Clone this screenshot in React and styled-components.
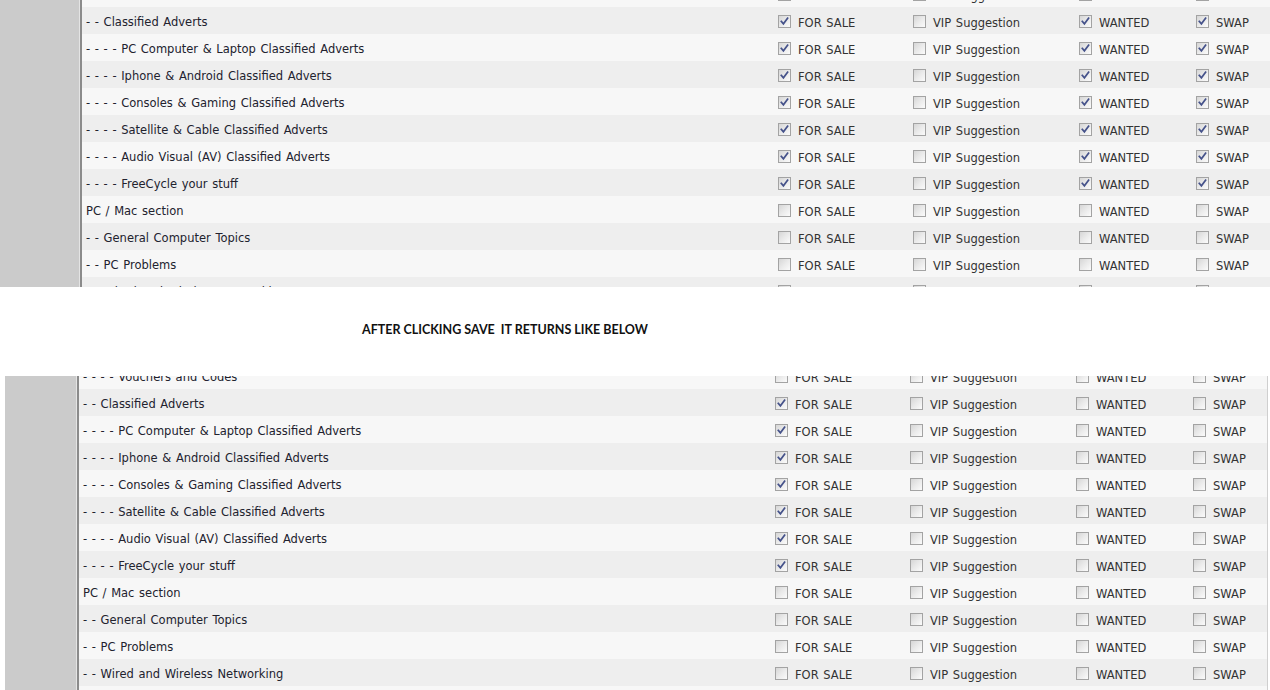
import React from 'react';
import styled, { createGlobalStyle } from 'styled-components';

const GlobalStyle = createGlobalStyle`
  html, body {
    margin: 0;
    padding: 0;
    background: #ffffff;
  }
  body {
    font-family: "DejaVu Sans", Verdana, sans-serif;
    font-size: 11.5px;
    overflow: hidden;
  }
`;

const forums = [
  '- - - - Vouchers and Codes',
  '- - Classified Adverts',
  '- - - - PC Computer & Laptop Classified Adverts',
  '- - - - Iphone & Android Classified Adverts',
  '- - - - Consoles & Gaming Classified Adverts',
  '- - - - Satellite & Cable Classified Adverts',
  '- - - - Audio Visual (AV) Classified Adverts',
  '- - - - FreeCycle your stuff',
  'PC / Mac section',
  '- - General Computer Topics',
  '- - PC Problems',
  '- - Wired and Wireless Networking',
  '- - Software and Operating Systems',
];

const options = [
  { key: 'sale', label: 'FOR SALE' },
  { key: 'vip', label: 'VIP Suggestion' },
  { key: 'wanted', label: 'WANTED' },
  { key: 'swap', label: 'SWAP' },
];

// rows 1..7 are the classified forums
const isClassified = (i) => i >= 1 && i <= 7;

const beforeSave = (i) =>
  isClassified(i) ? { sale: true, vip: false, wanted: true, swap: true } : {};

const afterSave = (i) => (isClassified(i) ? { sale: true } : {});

function Checkbox({ checked }) {
  return (
    <Box>
      {checked && (
        <svg width="11" height="11" viewBox="0 0 11 11">
          <path
            d="M2.3 5.4 L4.4 7.8 L8.6 2.2"
            fill="none"
            stroke="#45528a"
            strokeWidth="1.7"
            strokeLinecap="square"
          />
        </svg>
      )}
    </Box>
  );
}

function ForumRow({ label, state, odd }) {
  return (
    <Row $odd={odd}>
      <Title>{label}</Title>
      {options.map((o) => (
        <Option key={o.key}>
          <Checkbox checked={!!state[o.key]} />
          <OptionLabel>{o.label}</OptionLabel>
        </Option>
      ))}
    </Row>
  );
}

function Shot({ inset, side, shift, height, getState, framed }) {
  return (
    <Panel $inset={inset} $height={height}>
      <Sidebar $width={side} />
      <Divider />
      <Content $framed={framed}>
        <Rows $shift={shift}>
          {forums.map((f, i) => (
            <ForumRow key={f} label={f} state={getState(i)} odd={i % 2 === 1} />
          ))}
        </Rows>
      </Content>
    </Panel>
  );
}

export default function App() {
  return (
    <Page>
      <GlobalStyle />
      <Shot inset={0} side={79} shift={-20} height={287} getState={beforeSave} />
      <Note>
        <NoteText>AFTER CLICKING SAVE  IT RETURNS LIKE BELOW</NoteText>
      </Note>
      <Shot inset={5} side={71} shift={-14} height={314} getState={afterSave} framed />
    </Page>
  );
}

const Page = styled.div`
  width: 1270px;
  height: 690px;
  display: flex;
  flex-direction: column;
  overflow: hidden;
`;

const Panel = styled.div`
  display: flex;
  height: ${(p) => p.$height}px;
  flex-shrink: 0;
  padding-left: ${(p) => p.$inset}px;
  overflow: hidden;
  background: #ffffff;
`;

const Sidebar = styled.div`
  width: ${(p) => p.$width}px;
  flex-shrink: 0;
  background: #cbcbcb;
  border-right: 1px solid #e4e4e4;
`;

const Divider = styled.div`
  width: 2px;
  flex-shrink: 0;
  background: #8b8b8b;
`;

const Content = styled.div`
  width: 1188px;
  flex-shrink: 0;
  overflow: hidden;
  background: #f7f7f7;
  border-right: ${(p) => (p.$framed ? '1px solid #cfcfcf' : 'none')};
`;

const Rows = styled.div`
  display: flex;
  flex-direction: column;
  margin-top: ${(p) => p.$shift}px;
`;

const Row = styled.div`
  display: grid;
  grid-template-columns: 690px 135px 166px 117px 80px;
  height: 27px;
  align-items: center;
  background: ${(p) => (p.$odd ? '#eeeeee' : '#f7f7f7')};
`;

const Title = styled.div`
  padding-left: 4px;
  padding-top: 3px;
  color: #22222e;
  white-space: nowrap;
  word-spacing: 1px;
`;

const Option = styled.div`
  display: flex;
  align-items: flex-start;
  padding-left: 6px;
  padding-top: 4px;
`;

const Box = styled.span`
  box-sizing: border-box;
  width: 13px;
  height: 13px;
  flex-shrink: 0;
  margin-right: 7px;
  display: flex;
  align-items: center;
  justify-content: center;
  border: 1px solid #a3a3a3;
  background: linear-gradient(135deg, #d6d6d6 0%, #eaeaea 50%, #fbfbfb 100%);
`;

const OptionLabel = styled.span`
  padding-top: 1px;
  line-height: 14px;
  color: #333333;
  white-space: nowrap;
  word-spacing: 1px;
`;

const Note = styled.div`
  height: 89px;
  flex-shrink: 0;
  display: flex;
  align-items: center;
  padding-left: 362px;
  padding-bottom: 5px;
  box-sizing: border-box;
  background: #ffffff;
`;

const NoteText = styled.span`
  font-family: Lato, "Open Sans", sans-serif;
  font-weight: 700;
  font-size: 12.5px;
  color: #111111;
  white-space: pre;
`;
